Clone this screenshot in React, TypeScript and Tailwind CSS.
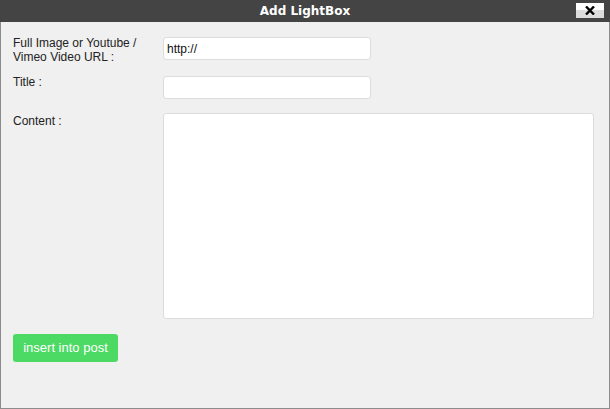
import React from "react";

export default function App() {
  const label = "text-[12px] leading-[14px] text-[#222]";
  return (
    <div className="w-[610px] h-[409px] bg-[#f0f0f0] border-x border-b border-[#8c8c8c] flex flex-col" style={{ fontFamily: '"Liberation Sans", Arial, sans-serif' }}>
      <div className="h-[22px] shrink-0 bg-[#444444] relative flex items-center justify-center -mx-px">
        <span className="text-white font-bold text-[12px] leading-none" style={{ fontFamily: '"DejaVu Sans", Verdana, sans-serif' }}>Add LightBox</span>
        <div className="absolute right-[6px] top-[3px] w-[28px] h-[15px] flex items-center justify-center bg-[linear-gradient(to_bottom,#ffffff_0%,#ffffff_50%,#dcdcdc_50%,#dcdcdc_100%)]">
          <svg width="10" height="9" viewBox="0 0 10 9">
            <path d="M1 0.5 L9 8.5 M9 0.5 L1 8.5" stroke="#000" strokeWidth="2.4" />
          </svg>
        </div>
      </div>
      <div className="flex flex-col pl-[12px] pt-[14px]">
        <div className="flex">
          <div className={`w-[150px] ${label}`}>Full Image or Youtube /<br />Vimeo Video URL :</div>
          <div className="mt-[1px] w-[208px] h-[23px] bg-white border border-[#dcdcdc] rounded-[3px] flex items-center px-[3px] text-[12px] text-[#111]">http://</div>
        </div>
        <div className="flex mt-[11px]">
          <div className={`w-[150px] ${label}`}>Title :</div>
          <div className="mt-[1px] w-[208px] h-[23px] bg-white border border-[#dcdcdc] rounded-[3px]" />
        </div>
        <div className="flex mt-[14px]">
          <div className={`w-[150px] pt-[1px] ${label}`}>Content :</div>
          <div className="w-[431px] h-[206px] bg-white border border-[#dcdcdc] rounded-[3px]" />
        </div>
        <div className="mt-[15px]">
          <div className="w-[105px] h-[28px] bg-[#4cd964] rounded-[3px] text-white text-[13px] flex items-center justify-center">insert into post</div>
        </div>
      </div>
    </div>
  );
}
